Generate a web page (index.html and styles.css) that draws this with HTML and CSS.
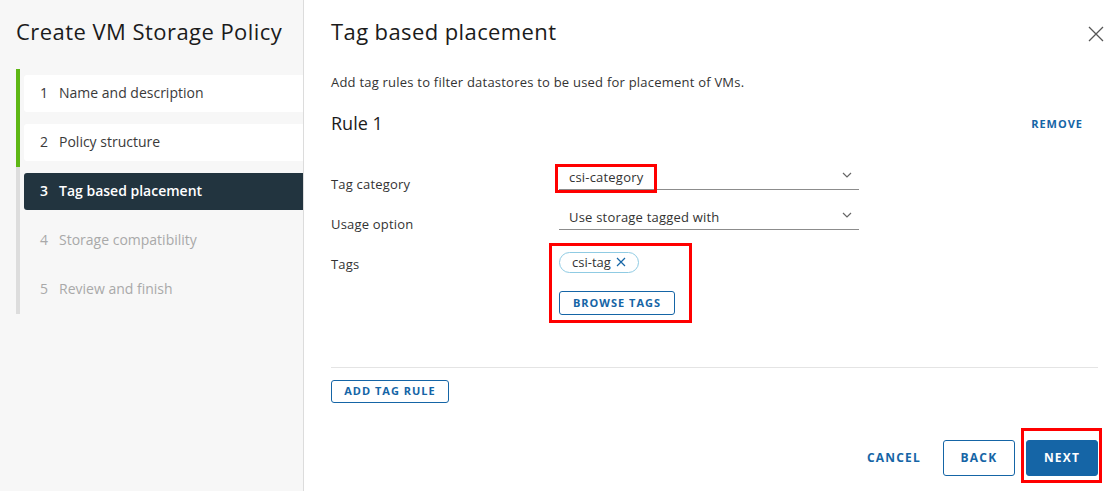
FILE: index.html
```html
<!DOCTYPE html>
<html lang="en">
<head>
<meta charset="utf-8">
<title>Create VM Storage Policy</title>
<link rel="stylesheet" href="styles.css">
</head>
<body>
<div class="app">
  <aside class="sidebar">
    <h1 class="side-title">Create VM Storage Policy</h1>
    <ol class="steps">
      <li class="step done"><div class="card"><span class="num">1</span>Name and description</div></li>
      <li class="step done"><div class="card"><span class="num">2</span>Policy structure</div></li>
      <li class="step current"><div class="card"><span class="num">3</span>Tag based placement</div></li>
      <li class="step todo"><div class="card"><span class="num">4</span>Storage compatibility</div></li>
      <li class="step todo"><div class="card"><span class="num">5</span>Review and finish</div></li>
    </ol>
  </aside>
  <main class="content">
    <header class="head">
      <h2 class="page-title">Tag based placement</h2>
      <button class="close" aria-label="Close">
        <svg width="16" height="16" viewBox="0 0 16 16"><path d="M1 1 L15 15 M15 1 L1 15" stroke="#565656" stroke-width="1.3" fill="none"/></svg>
      </button>
    </header>
    <p class="desc">Add tag rules to filter datastores to be used for placement of VMs.</p>
    <div class="rule-head">
      <h3 class="rule-title">Rule 1</h3>
      <button class="link-btn">REMOVE</button>
    </div>
    <div class="form">
      <div class="row">
        <label class="lbl">Tag category</label>
        <div class="select">
          <span class="sel-text">csi-category</span>
          <svg class="chev" width="10" height="6" viewBox="0 0 10 6"><path d="M1 1 L5 5 L9 1" stroke="#666" stroke-width="1.2" fill="none"/></svg>
          <div class="mark mark-cat"></div>
        </div>
      </div>
      <div class="row">
        <label class="lbl">Usage option</label>
        <div class="select">
          <span class="sel-text">Use storage tagged with</span>
          <svg class="chev" width="10" height="6" viewBox="0 0 10 6"><path d="M1 1 L5 5 L9 1" stroke="#666" stroke-width="1.2" fill="none"/></svg>
        </div>
      </div>
      <div class="row row-tags">
        <label class="lbl">Tags</label>
        <div class="tags">
          <span class="pill">csi-tag<svg class="pill-x" width="10" height="10" viewBox="0 0 10 10"><path d="M1 1 L9 9 M9 1 L1 9" stroke="#1565a6" stroke-width="1.2" fill="none"/></svg></span>
          <button class="btn btn-outline btn-sm">BROWSE TAGS</button>
          <div class="mark mark-tags"></div>
        </div>
      </div>
    </div>
    <div class="divider"></div>
    <div class="add-row"><button class="btn btn-outline btn-sm">ADD TAG RULE</button></div>
    <footer class="foot">
      <button class="btn btn-flat">CANCEL</button>
      <button class="btn btn-outline">BACK</button>
      <div class="next-wrap">
        <button class="btn btn-primary">NEXT</button>
        <div class="mark mark-next"></div>
      </div>
    </footer>
  </main>
</div>
</body>
</html>
```
FILE: styles.css
```css
* { box-sizing: border-box; }
html, body { margin: 0; padding: 0; }
body {
  font-family: "Open Sans", "Liberation Sans", sans-serif;
  color: #333;
  background: #fff;
  width: 1110px;
  height: 491px;
  overflow: hidden;
}
.app { display: flex; height: 491px; }

/* Sidebar */
.sidebar {
  width: 304px;
  flex: 0 0 304px;
  background: #f7f7f7;
  border-right: 1px solid #dcdcdc;
}
.side-title {
  margin: 17px 0 0 16px;
  font-size: 22px;
  line-height: 28px;
  font-weight: 400;
  color: #1b1b1b;
  letter-spacing: 0.45px;
}
.steps {
  list-style: none;
  margin: 24px 0 0 16px;
  padding: 0;
}
.step {
  border-left: 4px solid #dddddd;
  height: 49px;
  padding: 6px 0 6px 4px;
}
.step.done { border-left-color: #5eb715; }
.card {
  height: 37px;
  display: flex;
  align-items: center;
  padding-left: 16px;
  padding-bottom: 2px;
  font-size: 14px;
  color: #3a3a3a;
  border-radius: 3px 0 0 3px;
}
.num { width: 19px; }
.done .card { background: #fff; }
.current .card { background: #22343f; color: #fff; font-weight: 600; }
.todo .card { color: #a9a9a9; }

/* Content */
.content {
  flex: 1;
  padding: 0 12px 0 27px;
  display: flex;
  flex-direction: column;
}
.head {
  display: flex;
  justify-content: space-between;
  align-items: flex-start;
  margin-top: 17px;
}
.page-title {
  margin: 0;
  font-size: 22px;
  line-height: 28px;
  font-weight: 400;
  color: #1b1b1b;
  letter-spacing: 0.4px;
}
.close {
  border: 0;
  background: none;
  padding: 0;
  margin: 9px -6px 0 0;
  width: 16px;
  height: 16px;
  cursor: pointer;
}
.close svg { display: block; }
.desc {
  margin: 28px 0 0;
  font-size: 13px;
  line-height: 18px;
  color: #333;
  letter-spacing: 0.22px;
}
.rule-head {
  display: flex;
  justify-content: space-between;
  align-items: center;
  margin-top: 20px;
  height: 24px;
}
.rule-title {
  margin: 0;
  font-size: 18px;
  line-height: 22px;
  font-weight: 400;
  color: #1b1b1b;
}
.link-btn {
  border: 0;
  background: none;
  font-family: inherit;
  font-size: 11px;
  font-weight: 700;
  letter-spacing: 1px;
  color: #1565a6;
  padding: 0 15px 0 0;
}

.form { margin-top: 31px; }
.row {
  display: flex;
  align-items: flex-start;
  height: 40px;
}
.lbl {
  width: 228px;
  flex: 0 0 228px;
  font-size: 13px;
  line-height: 18px;
  margin-top: 9px;
  color: #333;
  letter-spacing: 0.2px;
}
.select {
  position: relative;
  width: 300px;
  height: 24px;
  border-bottom: 1px solid #8c8c8c;
  display: flex;
  align-items: center;
  justify-content: space-between;
  padding: 0 7px 2px 10px;
  font-size: 13px;
  color: #333;
  letter-spacing: 0.2px;
}
.chev { display: block; margin-top: -3px; }
.row-tags { height: auto; }
.tags {
  position: relative;
  display: flex;
  flex-direction: column;
  align-items: flex-start;
}
.pill {
  margin-top: 6px;
  height: 21px;
  width: 80px;
  border: 1px solid #8fcbe3;
  border-radius: 11px;
  display: inline-flex;
  align-items: center;
  padding: 0 0 1px 12px;
  font-size: 13px;
  color: #333;
}
.pill-x { margin-left: 5px; }

.btn {
  font-family: inherit;
  font-weight: 700;
  letter-spacing: 1.2px;
  border-radius: 3px;
  cursor: pointer;
  font-size: 12px;
  height: 36px;
  padding: 0 0 1px;
}
.btn-outline {
  background: #fff;
  border: 1px solid #1565a6;
  color: #1565a6;
}
.btn-sm {
  height: 24px;
  font-size: 11px;
  letter-spacing: 1px;
}
.tags .btn-sm { margin-top: 18px; width: 116px; }
.btn-flat {
  background: none;
  border: 0;
  color: #1565a6;
  width: 76px;
}
.btn-primary {
  background: #1565a6;
  border: 1px solid #1565a6;
  color: #fff;
  width: 72px;
}
.foot .btn-outline { width: 72px; }

.divider {
  margin-top: 52px;
  height: 1px;
  background: #e4e4e4;
}
.add-row { margin-top: 10px; }
.add-row .btn-sm { width: 118px; height: 23px; }

.foot {
  margin-top: 37px;
  display: flex;
  justify-content: flex-end;
  align-items: center;
  gap: 11px;
}
.next-wrap { position: relative; }
.next-wrap .btn { display: block; }

/* red annotation boxes */
.mark {
  position: absolute;
  border: 3px solid #f00;
  pointer-events: none;
}
.mark-cat { left: -4px; top: -2px; width: 102px; height: 29px; }
.mark-tags { left: -10px; top: -3px; width: 143px; height: 80px; }
.mark-next { left: -5px; top: -12px; width: 81px; height: 55px; }
```
